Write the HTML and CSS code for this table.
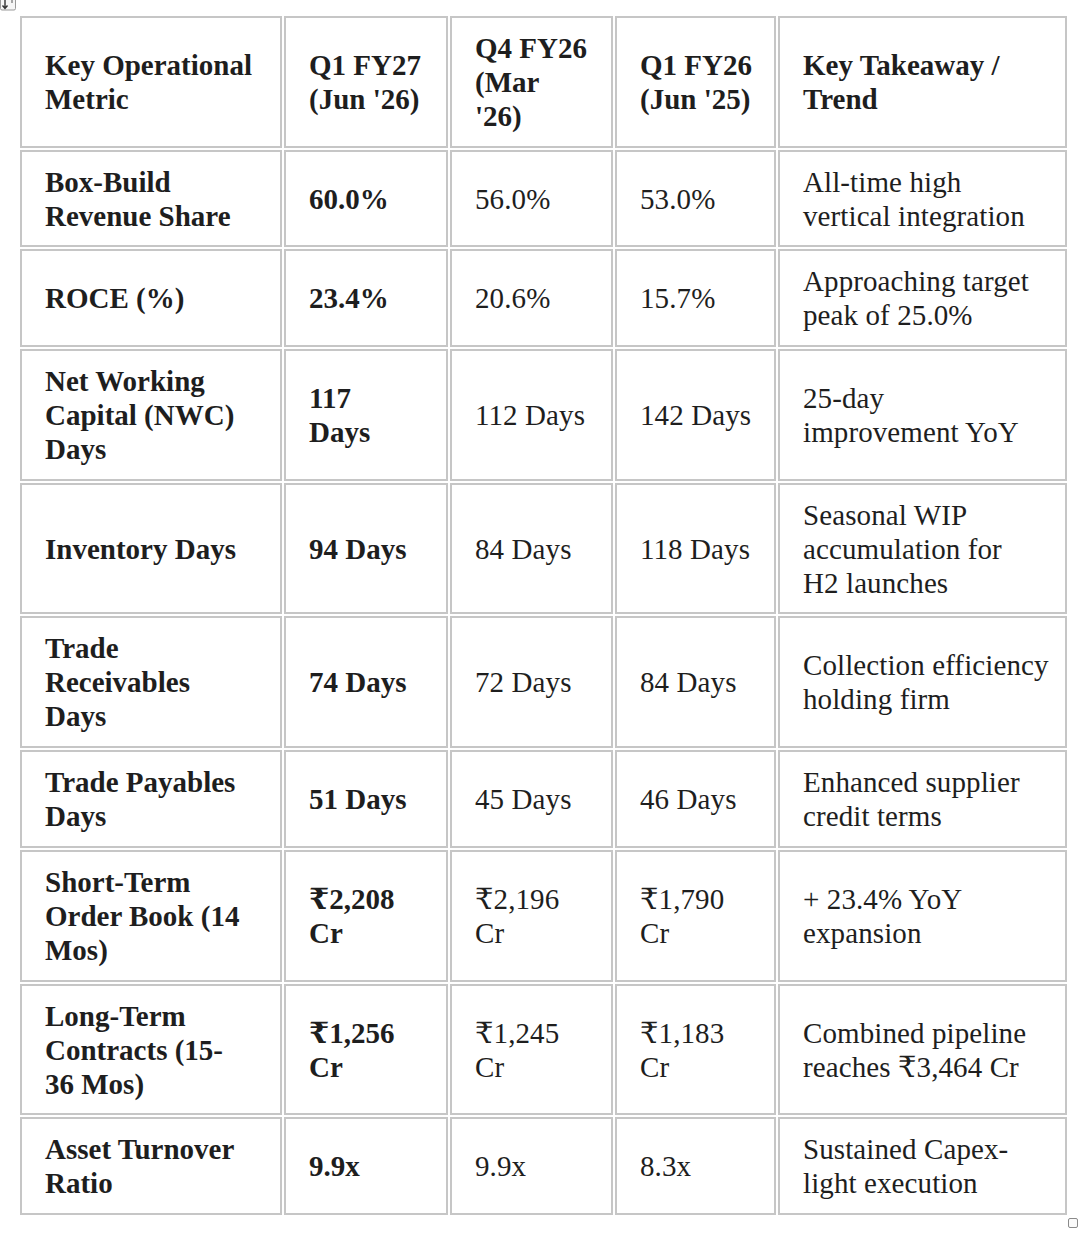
FILE: index.html
```html
<!DOCTYPE html>
<html>
<head>
<meta charset="utf-8">
<link rel="stylesheet" href="styles.css">
</head>
<body>
<div class="page">
  <svg class="move-handle" width="16" height="12" viewBox="0 0 16 12">
    <rect x="0.5" y="-4" width="15" height="14" rx="1.5" fill="#f6f6f6" stroke="#9a9a9a"/>
    <path d="M5 0 V8 M2.5 5.5 L5 8.5 L7.5 5.5" fill="none" stroke="#333" stroke-width="1.4"/>
    <path d="M12 0 V3" fill="none" stroke="#555" stroke-width="1"/>
  </svg>
  <table class="metrics">
    <colgroup>
      <col class="c1"><col class="c2"><col class="c3"><col class="c4"><col class="c5">
    </colgroup>
    <thead>
      <tr>
        <th>Key Operational<br>Metric</th>
        <th>Q1 FY27<br>(Jun '26)</th>
        <th>Q4 FY26<br>(Mar<br>'26)</th>
        <th>Q1 FY26<br>(Jun '25)</th>
        <th>Key Takeaway /<br>Trend</th>
      </tr>
    </thead>
    <tbody>
      <tr>
        <td class="b">Box-Build<br>Revenue Share</td>
        <td class="b">60.0%</td>
        <td>56.0%</td>
        <td>53.0%</td>
        <td>All-time high<br>vertical integration</td>
      </tr>
      <tr>
        <td class="b">ROCE (%)</td>
        <td class="b">23.4%</td>
        <td>20.6%</td>
        <td>15.7%</td>
        <td>Approaching target<br>peak of 25.0%</td>
      </tr>
      <tr>
        <td class="b">Net Working<br>Capital (NWC)<br>Days</td>
        <td class="b">117<br>Days</td>
        <td>112 Days</td>
        <td>142 Days</td>
        <td>25-day<br>improvement YoY</td>
      </tr>
      <tr>
        <td class="b">Inventory Days</td>
        <td class="b">94 Days</td>
        <td>84 Days</td>
        <td>118 Days</td>
        <td>Seasonal WIP<br>accumulation for<br>H2 launches</td>
      </tr>
      <tr>
        <td class="b">Trade<br>Receivables<br>Days</td>
        <td class="b">74 Days</td>
        <td>72 Days</td>
        <td>84 Days</td>
        <td>Collection efficiency<br>holding firm</td>
      </tr>
      <tr>
        <td class="b">Trade Payables<br>Days</td>
        <td class="b">51 Days</td>
        <td>45 Days</td>
        <td>46 Days</td>
        <td>Enhanced supplier<br>credit terms</td>
      </tr>
      <tr>
        <td class="b">Short-Term<br>Order Book (14<br>Mos)</td>
        <td class="b">₹2,208<br>Cr</td>
        <td>₹2,196<br>Cr</td>
        <td>₹1,790<br>Cr</td>
        <td>+ 23.4% YoY<br>expansion</td>
      </tr>
      <tr>
        <td class="b">Long-Term<br>Contracts (15-<br>36 Mos)</td>
        <td class="b">₹1,256<br>Cr</td>
        <td>₹1,245<br>Cr</td>
        <td>₹1,183<br>Cr</td>
        <td>Combined pipeline<br>reaches ₹3,464 Cr</td>
      </tr>
      <tr>
        <td class="b">Asset Turnover<br>Ratio</td>
        <td class="b">9.9x</td>
        <td>9.9x</td>
        <td>8.3x</td>
        <td>Sustained Capex-<br>light execution</td>
      </tr>
    </tbody>
  </table>
  <div class="resize-handle"></div>
</div>
</body>
</html>
```

FILE: styles.css
```css
html, body {
  margin: 0;
  padding: 0;
  background: #ffffff;
}

.page {
  position: relative;
  width: 1086px;
  height: 1236px;
  padding: 14px 0 0 18px;
  box-sizing: border-box;
}

.move-handle {
  position: absolute;
  left: 0;
  top: 0;
}

.metrics {
  table-layout: fixed;
  width: 1051px;
  border-collapse: separate;
  border-spacing: 2px;
  font-family: "Liberation Serif", "DejaVu Serif", serif;
  font-size: 29px;
  line-height: 34px;
  color: #1e1e1e;
}

.c1 { width: 262px; }
.c2 { width: 164px; }
.c3 { width: 163px; }
.c4 { width: 161px; }
.c5 { width: 289px; }

.metrics th,
.metrics td {
  border: 2px solid #c6c6c6;
  padding: 13px 7px 12.7px 23px;
  text-align: left;
  vertical-align: middle;
  white-space: nowrap;
  box-sizing: border-box;
}

.metrics th {
  font-weight: bold;
}

.metrics td {
  font-weight: normal;
  letter-spacing: 0.1px;
}

.metrics td.b {
  font-weight: bold;
  letter-spacing: 0;
}

.resize-handle {
  position: absolute;
  left: 1068px;
  top: 1218px;
  width: 10px;
  height: 10px;
  border: 1.5px solid #8a8a8a;
  border-radius: 2px;
  background: #fafafa;
  box-sizing: border-box;
}
```
